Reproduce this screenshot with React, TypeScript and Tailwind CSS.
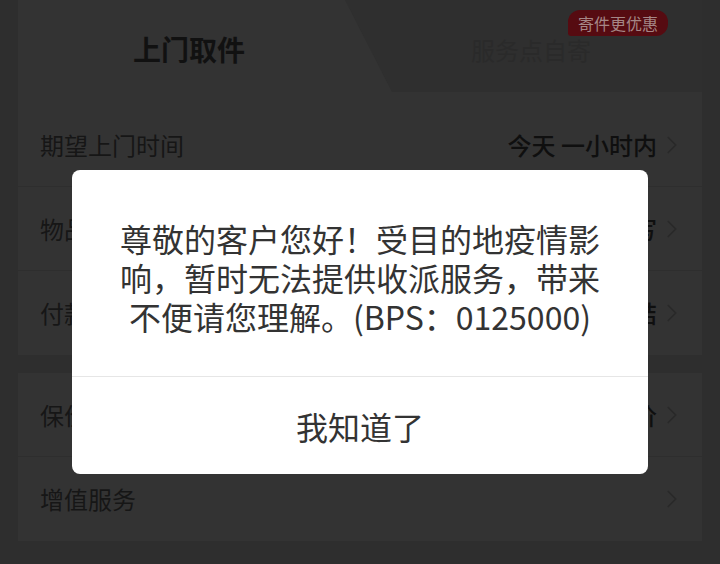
import { ChevronRight } from 'lucide-react'

const rowsTop = [
  { label: '期望上门时间', value: '今天 一小时内' },
  { label: '物品信息', value: '请填写' },
  { label: '付款方式', value: '寄付现结' }
]

const rowsBottom = [
  { label: '保价服务', value: '建议保价' },
  { label: '增值服务', value: '' }
]

const Row = ({ label, value, last }: { label: string; value: string; last?: boolean }) => (
  <div className={`flex h-[84px] items-center pl-[22px] pr-[15px] ${last ? '' : 'border-b border-[#2e2e2e]'}`}>
    <span className="flex-1 text-[24px] text-[#161616]">{label}</span>
    {value && <span className="text-[24px] font-medium text-[#0f0f0f]">{value}</span>}
    <ChevronRight size={30} strokeWidth={1.4} className="text-[#292929]" />
  </div>
)

export default function App() {
  return (
    <div
      className="relative h-[564px] w-[720px] overflow-hidden bg-[#2e2e2e] px-[18px]"
      style={{ fontFamily: '"Noto Sans CJK SC", "Noto Sans", sans-serif' }}
    >
      <div className="bg-[#333333]">
        <div className="relative flex h-[92px] bg-[#2f2f2f]">
          <div className="absolute inset-0 bg-[#333333] [clip-path:polygon(0_0,327px_0,374px_100%,0_100%)]" />
          <div className="relative flex w-[342px] items-center justify-center pt-[6px] text-[28px] font-bold text-[#111111]">
            上门取件
          </div>
          <div className="relative flex flex-1 items-center justify-center pt-[8px] text-[24px] text-[#2a2a2a]">
            服务点自寄
          </div>
          <div className="absolute right-[34px] top-[10px] rounded-[12px] rounded-bl-[3px] bg-[#560b11] px-[10px] py-[1px] text-[16px] leading-[24px] text-[#a58686]">
            寄件更优惠
          </div>
        </div>
        <div className="pt-[11px]">
          {rowsTop.map((r, i) => (
            <Row key={r.label} {...r} last={i === rowsTop.length - 1} />
          ))}
        </div>
      </div>

      <div className="mt-[18px] bg-[#333333]">
        {rowsBottom.map((r, i) => (
          <Row key={r.label} {...r} last={i === rowsBottom.length - 1} />
        ))}
      </div>

      <div className="absolute left-[72px] top-[170px] w-[576px] overflow-hidden rounded-[8px] bg-white">
        <div className="flex h-[206px] flex-col items-center pt-[49px] text-center text-[32px] leading-[39px] text-[#333333]">
          <span>尊敬的客户您好！受目的地疫情影</span>
          <span>响，暂时无法提供收派服务，带来</span>
          <span>不便请您理解。(BPS：0125000)</span>
        </div>
        <div className="flex h-[98px] items-center justify-center border-t border-[#e6e6e6] text-[32px] text-[#333333]">
          我知道了
        </div>
      </div>
    </div>
  )
}
